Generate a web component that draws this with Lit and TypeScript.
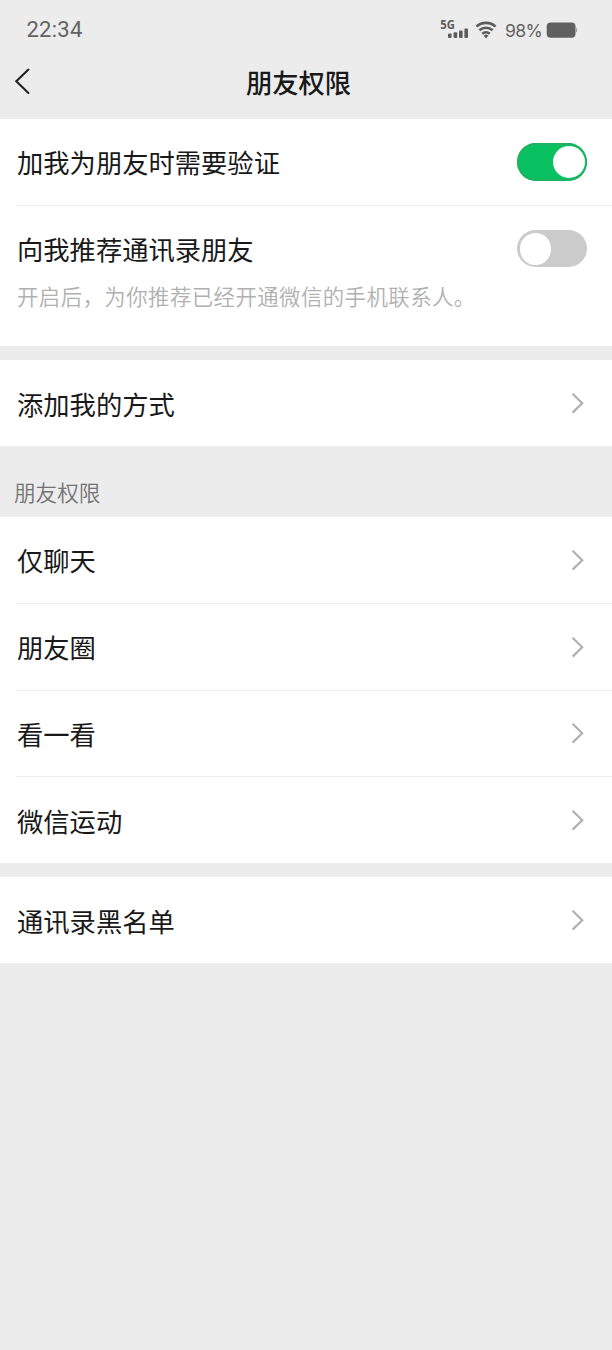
import { LitElement, html, css } from "lit";
import { customElement, property } from "lit/decorators.js";

const FONT = css`"Noto Sans CJK SC", sans-serif`;

@customElement("status-bar")
class StatusBar extends LitElement {
  static styles = css`
    :host { display: flex; height: 60px; padding: 0 34px 0 26.5px; align-items: center; color: #636363; font-family: Roboto, sans-serif; }
    .time { flex: 1; font-size: 22px; letter-spacing: 0.25px; line-height: 60px; }
    .signal { width: 30px; height: 24px; }
    .net { font: 700 11.5px "Open Sans", sans-serif; fill: #5c5c5c; }
    .wifi { width: 22px; height: 18px; margin-left: 6px; }
    .level { margin-left: 8px; width: 41px; font: 17.6px Inter, sans-serif; letter-spacing: -0.7px; }
    .battery { width: 32px; height: 18px; }
  `;
  render() {
    return html`
      <span class="time">22:34</span>
      <svg class="signal" viewBox="0 0 30 24">
        <text class="net" x="1.3" y="11.4" textLength="14.5" lengthAdjust="spacingAndGlyphs">5G</text>
        <g fill="#5c5c5c">
          <rect x="9" y="15.5" width="3.6" height="4.5" rx="1" />
          <rect x="14.6" y="14.3" width="3.6" height="5.7" rx="1" />
          <rect x="20" y="12.6" width="3.6" height="7.4" rx="1" />
          <rect x="25.4" y="10.6" width="3.6" height="9.4" rx="1" />
        </g>
      </svg>
      <svg class="wifi" viewBox="0 0 22 18" fill="none" stroke="#5c5c5c" stroke-width="2.6">
        <path d="M1.4 5.6a14.2 14.2 0 0 1 19.2 0" />
        <path d="M4.4 9.3a9.8 9.8 0 0 1 13.2 0" />
        <path d="M7.3 12.8a5.6 5.6 0 0 1 7.4 0" />
        <path d="M8.7 14.8a3.2 3.2 0 0 1 4.6 0l-2.3 2.6z" fill="#5c5c5c" stroke="none" />
      </svg>
      <span class="level">98%</span>
      <svg class="battery" viewBox="0 0 32 18" fill="#606060">
        <rect x="0.7" y="1.4" width="28.8" height="15.4" rx="4" />
        <path d="M29.8 6.6q1.2.3 1.2 1.6v1.8q0 1.3-1.2 1.6z" fill="#999" />
      </svg>
    `;
  }
}

@customElement("nav-bar")
class NavBar extends LitElement {
  @property() heading = "";
  static styles = css`
    :host { display: grid; grid-template-columns: 60px 1fr 60px; height: 59px; }
    .back { width: 18px; height: 28px; margin: 7px 0 0 14px; }
    .title { text-align: center; font: 500 26.3px/44px ${FONT}; color: #191919; padding-right: 15px; }
  `;
  render() {
    return html`
      <svg class="back" viewBox="0 0 18 28" fill="none" stroke="#222" stroke-width="2.1" stroke-linecap="round">
        <path d="M14.4 2.6 2.3 14.2 14.4 26" />
      </svg>
      <div class="title">${this.heading}</div>
    `;
  }
}

@customElement("toggle-switch")
class ToggleSwitch extends LitElement {
  @property({ type: Boolean, reflect: true }) on = false;
  static styles = css`
    :host { display: flex; align-items: center; box-sizing: border-box; width: 70.4px; height: 37.6px; border-radius: 19px; padding: 0 2.6px; background: #cbcbcb; }
    :host([on]) { justify-content: flex-end; background: #09c160; box-shadow: inset 0 0 0 2px #1eb362; }
    .knob { width: 31.8px; height: 31.8px; border-radius: 50%; background: #fff; }
  `;
  render() {
    return html`<div class="knob"></div>`;
  }
}

@customElement("setting-row")
class SettingRow extends LitElement {
  @property() label = "";
  @property() note = "";
  @property({ type: Boolean }) divided = false;
  static styles = css`
    :host { display: block; padding-left: 16px; background: #fff; }
    .line { display: flex; align-items: center; justify-content: space-between; height: 85.75px; padding-right: 24.6px; }
    .label { font: 400 26.3px/40px ${FONT}; color: #191919; padding: 1px 0 0 1px; }
    .note { font: 350 21.4px/30px ${FONT}; letter-spacing: 0.45px; color: #b0b0b0; height: 65.5px; margin-top: -11px; padding-left: 1px; }
    .rule { height: 1px; background: #ededed; }
    .arrow { width: 14px; height: 24px; margin-right: 2px; }
  `;
  render() {
    return html`
      <div class="line">
        <span class="label">${this.label}</span>
        <slot>
          <svg class="arrow" viewBox="0 0 14 24" fill="none" stroke="#b0b0b0" stroke-width="2.2">
            <path d="M1.6 2.8 11.2 12.2 1.6 21.6" />
          </svg>
        </slot>
      </div>
      ${this.note ? html`<div class="note">${this.note}</div>` : ""}
      ${this.divided ? html`<div class="rule"></div>` : ""}
    `;
  }
}

@customElement("app-root")
class AppRoot extends LitElement {
  static styles = css`
    :host { display: block; min-height: 1350px; background: #ececec; }
    .groups { display: flex; flex-direction: column; }
    .gap { height: 14.25px; }
    .section { box-sizing: border-box; height: 71px; padding: 31px 0 0 14px; font: 350 21.6px/30px ${FONT}; color: #737373; }
  `;
  render() {
    const scopes = ["仅聊天", "朋友圈", "看一看", "微信运动"];
    return html`
      <status-bar></status-bar>
      <nav-bar heading="朋友权限"></nav-bar>
      <div class="groups">
        <setting-row label="加我为朋友时需要验证" divided><toggle-switch on></toggle-switch></setting-row>
        <setting-row label="向我推荐通讯录朋友" note="开启后，为你推荐已经开通微信的手机联系人。"><toggle-switch></toggle-switch></setting-row>
        <div class="gap"></div>
        <setting-row label="添加我的方式"></setting-row>
        <div class="section">朋友权限</div>
        ${scopes.map((s, i) => html`<setting-row label=${s} ?divided=${i < scopes.length - 1}></setting-row>`)}
        <div class="gap"></div>
        <setting-row label="通讯录黑名单"></setting-row>
      </div>
    `;
  }
}
